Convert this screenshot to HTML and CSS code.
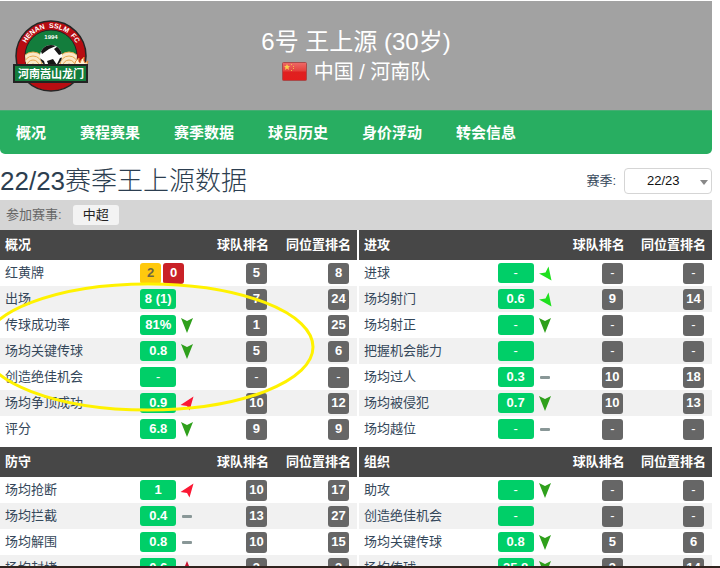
FILE: index.html
```html
<!DOCTYPE html>
<html lang="zh-CN">
<head>
<meta charset="utf-8">
<meta name="viewport" content="width=device-width, initial-scale=1">
<title>王上源 22/23赛季数据</title>
<link rel="stylesheet" href="styles.css">
</head>
<body>
<svg class="symbols" aria-hidden="true">
  <symbol id="down" viewBox="0 0 14 16"><path d="M1 1 7 4 13 1 7 16Z" fill="#2fa01c"/></symbol>
  <symbol id="up" viewBox="0 0 14 16"><path d="M1 16 7 12 13 16 7 1Z" fill="#c8102e"/></symbol>
  <symbol id="down-light" viewBox="0 0 14 16"><path d="M1 8.500 7.500 7.500 10.500 1.500 13.500 15.500Z" fill="#1fe01f"/></symbol>
  <symbol id="up-light" viewBox="0 0 14 16"><path d="M.5 10 13.500 1.500 9.500 15.500 7 11Z" fill="#fb1834"/></symbol>
  <symbol id="flat" viewBox="0 0 14 16"><rect x="2" y="7" width="10" height="3" rx="1" fill="#899797"/></symbol>
</svg>
<div class="page">
  <header class="hero">
    <svg class="crest" viewBox="0 0 76 74" role="img" aria-label="河南嵩山龙门">
      <defs>
        <path id="arc" d="M10 37A28 28 0 0 1 66 37"/>
        <clipPath id="inner"><circle cx="38" cy="37" r="26"/></clipPath>
        <clipPath id="ball"><circle cx="38" cy="37" r="11"/></clipPath>
      </defs>
      <circle cx="38" cy="37" r="35" fill="#b80d12" stroke="#252525" stroke-width="1.500"/>
      <circle cx="38" cy="37" r="26" fill="#137d3c" stroke="#222"/>
      <text class="crest-name"><textPath href="#arc" startOffset="50%" text-anchor="middle">HENAN&nbsp; SSLM&nbsp; FC</textPath></text>
      <text class="crest-year" x="38" y="20">1994</text>
      <g clip-path="url(#inner)" fill="#f9e8c8" stroke="#e8a850">
        <circle cx="20" cy="45" r="12"/><circle cx="20" cy="46" r="9"/><circle cx="20" cy="47" r="6"/><circle cx="20" cy="48" r="3"/>
        <circle cx="56" cy="45" r="12"/><circle cx="56" cy="46" r="9"/><circle cx="56" cy="47" r="6"/><circle cx="56" cy="48" r="3"/>
      </g>
      <path d="M61 47q1-6 5-8-1 4 1 5 1-4 4-6-1 4 1 6l3-2q0 4-4 5Z" fill="#fff2d8" stroke="#e58b35"/>
      <circle cx="38" cy="37" r="11" fill="#fff"/>
      <path clip-path="url(#ball)" d="M34 23 43 27 36 30 29 35 27 30ZM45 27 51 34 46 36 41 30ZM34 42 40 40 44 46 37 50ZM25 38 31 42 33 49 27 48ZM47 39 51 38 47 47 44 45Z" fill="#161616"/>
      <rect x="1" y="46" width="73" height="17" fill="#137d3c" stroke="#232323" stroke-width="2"/>
      <text class="crest-city" x="38" y="59">河南嵩山龙门</text>
    </svg>
    <div class="identity">
      <h1>6号 王上源 (30岁)</h1>
      <p>
        <svg class="flag" viewBox="0 0 25 19" aria-hidden="true">
          <defs><linearGradient id="shine" x2="0" y2="1"><stop stop-color="#ee6a68"/><stop offset=".48" stop-color="#e3403c"/><stop offset=".52" stop-color="#df2020"/><stop offset="1" stop-color="#e31d1d"/></linearGradient></defs>
          <rect x=".5" y=".5" width="24" height="18" rx="1" fill="url(#shine)" stroke="#a94a4a"/>
          <path d="m5 2 1 2h2L6.500 5.500 7 8 5 6.500 3 8l.5-2.500L2 4h2Z" fill="#f8d04c"/>
          <path d="M9 2h1v1H9zM11 4h1v1h-1zM11 6h1v1h-1zM9 8h1v1H9z" fill="#f3b64c"/>
        </svg>
        <span>中国 / 河南队</span>
      </p>
    </div>
  </header>
  <nav class="tabs">
    <a href="#">概况</a><a href="#">赛程赛果</a><a href="#">赛季数据</a><a href="#">球员历史</a><a href="#">身价浮动</a><a href="#">转会信息</a>
  </nav>
  <div class="season">
    <h2>22/23赛季王上源数据</h2>
    <label for="season">赛季:</label>
    <span class="picker"><select id="season"><option>22/23</option></select></span>
  </div>
  <div class="filter"><span>参加赛事:</span><button type="button">中超</button></div>
  <main class="stats">
    <table>
      <thead><tr><th class="name">概况</th><th class="value"></th><th class="rank">球队排名</th><th class="rank">同位置排名</th></tr></thead>
      <tbody>
        <tr><td>红黄牌</td><td><span class="cell"><b class="card yellow">2</b><b class="card red">0</b></span></td><td><b class="place">5</b></td><td><b class="place">8</b></td></tr>
        <tr><td>出场</td><td><span class="cell"><b class="score">8 (1)</b></span></td><td><b class="place">7</b></td><td><b class="place">24</b></td></tr>
        <tr><td>传球成功率</td><td><span class="cell"><b class="score">81%</b><svg class="trend"><use href="#down"/></svg></span></td><td><b class="place">1</b></td><td><b class="place">25</b></td></tr>
        <tr><td>场均关键传球</td><td><span class="cell"><b class="score">0.8</b><svg class="trend"><use href="#down"/></svg></span></td><td><b class="place">5</b></td><td><b class="place">6</b></td></tr>
        <tr><td>创造绝佳机会</td><td><span class="cell"><b class="score none">-</b></span></td><td><b class="place none">-</b></td><td><b class="place none">-</b></td></tr>
        <tr><td>场均争顶成功</td><td><span class="cell"><b class="score">0.9</b><svg class="trend"><use href="#up-light"/></svg></span></td><td><b class="place">10</b></td><td><b class="place">12</b></td></tr>
        <tr><td>评分</td><td><span class="cell"><b class="score">6.8</b><svg class="trend"><use href="#down"/></svg></span></td><td><b class="place">9</b></td><td><b class="place">9</b></td></tr>
      </tbody>
    </table>
    <table>
      <thead><tr><th class="name">进攻</th><th class="value"></th><th class="rank">球队排名</th><th class="rank">同位置排名</th></tr></thead>
      <tbody>
        <tr><td>进球</td><td><span class="cell"><b class="score none">-</b><svg class="trend"><use href="#down-light"/></svg></span></td><td><b class="place none">-</b></td><td><b class="place none">-</b></td></tr>
        <tr><td>场均射门</td><td><span class="cell"><b class="score">0.6</b><svg class="trend"><use href="#down-light"/></svg></span></td><td><b class="place">9</b></td><td><b class="place">14</b></td></tr>
        <tr><td>场均射正</td><td><span class="cell"><b class="score none">-</b><svg class="trend"><use href="#down"/></svg></span></td><td><b class="place none">-</b></td><td><b class="place none">-</b></td></tr>
        <tr><td>把握机会能力</td><td><span class="cell"><b class="score none">-</b></span></td><td><b class="place none">-</b></td><td><b class="place none">-</b></td></tr>
        <tr><td>场均过人</td><td><span class="cell"><b class="score">0.3</b><svg class="trend"><use href="#flat"/></svg></span></td><td><b class="place">10</b></td><td><b class="place">18</b></td></tr>
        <tr><td>场均被侵犯</td><td><span class="cell"><b class="score">0.7</b><svg class="trend"><use href="#down"/></svg></span></td><td><b class="place">10</b></td><td><b class="place">13</b></td></tr>
        <tr><td>场均越位</td><td><span class="cell"><b class="score none">-</b><svg class="trend"><use href="#flat"/></svg></span></td><td><b class="place none">-</b></td><td><b class="place none">-</b></td></tr>
      </tbody>
    </table>
    <table>
      <thead><tr><th class="name">防守</th><th class="value"></th><th class="rank">球队排名</th><th class="rank">同位置排名</th></tr></thead>
      <tbody>
        <tr><td>场均抢断</td><td><span class="cell"><b class="score">1</b><svg class="trend"><use href="#up-light"/></svg></span></td><td><b class="place">10</b></td><td><b class="place">17</b></td></tr>
        <tr><td>场均拦截</td><td><span class="cell"><b class="score">0.4</b><svg class="trend"><use href="#flat"/></svg></span></td><td><b class="place">13</b></td><td><b class="place">27</b></td></tr>
        <tr><td>场均解围</td><td><span class="cell"><b class="score">0.8</b><svg class="trend"><use href="#flat"/></svg></span></td><td><b class="place">10</b></td><td><b class="place">15</b></td></tr>
        <tr><td>场均封堵</td><td><span class="cell"><b class="score">0.6</b><svg class="trend"><use href="#up"/></svg></span></td><td><b class="place">3</b></td><td><b class="place">3</b></td></tr>
      </tbody>
    </table>
    <table>
      <thead><tr><th class="name">组织</th><th class="value"></th><th class="rank">球队排名</th><th class="rank">同位置排名</th></tr></thead>
      <tbody>
        <tr><td>助攻</td><td><span class="cell"><b class="score none">-</b><svg class="trend"><use href="#down"/></svg></span></td><td><b class="place none">-</b></td><td><b class="place none">-</b></td></tr>
        <tr><td>创造绝佳机会</td><td><span class="cell"><b class="score none">-</b></span></td><td><b class="place none">-</b></td><td><b class="place none">-</b></td></tr>
        <tr><td>场均关键传球</td><td><span class="cell"><b class="score">0.8</b><svg class="trend"><use href="#down"/></svg></span></td><td><b class="place">5</b></td><td><b class="place">6</b></td></tr>
        <tr><td>场均传球</td><td><span class="cell"><b class="score">35.8</b><svg class="trend"><use href="#down"/></svg></span></td><td><b class="place">3</b></td><td><b class="place">14</b></td></tr>
      </tbody>
    </table>
    <svg class="marker" viewBox="0 0 320 132" aria-hidden="true"><ellipse cx="148" cy="66" rx="165" ry="63"/></svg>
  </main>
</div>
<div class="edge"></div>
</body>
</html>
```

FILE: styles.css
```css
* { box-sizing: border-box; }

body {
  margin: 0;
  height: 100vh;
  display: flex;
  flex-direction: column;
  overflow: hidden;
  background: #fff;
  color: #34475a;
  font: 400 13px/18px "Liberation Sans", "Noto Sans CJK SC", sans-serif;
}

h1, h2, p { margin: 0; font-weight: 400; }

.symbols { position: absolute; width: 0; height: 0; }

.page {
  flex: 1;
  min-height: 0;
  overflow: hidden;
  padding: 1px 8px 0 0;
}

.edge { height: 2px; background: #30231e; }

/* Player header */
.hero {
  display: grid;
  grid-template-columns: 88px 1fr 88px;
  align-items: center;
  height: 109px;
  background: #a2a2a2;
  color: #fff;
}

.crest { width: 76px; height: 74px; margin-left: 13px; overflow: visible; }
.crest text { fill: #fff; font-weight: 700; }
.crest .crest-name { font-size: 7px; }
.crest .crest-year { font-size: 6px; text-anchor: middle; }
.crest .crest-city { font-size: 11px; text-anchor: middle; }

.identity { text-align: center; }
.identity h1 { font-size: 24px; line-height: 32px; }
.identity p {
  display: flex;
  justify-content: center;
  align-items: center;
  gap: 7px;
  font-size: 20px;
  line-height: 28px;
}
.flag { width: 25px; height: 19px; }

.tabs {
  display: flex;
  gap: 34px;
  height: 44px;
  padding: 0 16px;
  background: #28ae61;
  border-top: 1px solid #45ad72;
  border-radius: 0 0 5px 5px;
}
.tabs a {
  color: #fff;
  font-size: 15px;
  font-weight: 700;
  line-height: 44px;
  text-decoration: none;
}

/* Season title and picker */
.season { display: flex; align-items: center; height: 46px; padding-top: 8px; }
.season h2 { flex: 1; font-size: 26px; font-weight: 300; line-height: 36px; color: #2c3e50; }
.season label { margin-right: 8px; }
.picker { position: relative; }
.picker::after {
  content: "";
  position: absolute;
  right: 4px;
  top: 12px;
  border: 4px solid transparent;
  border-top: 5px solid #888;
  border-bottom: 0;
  pointer-events: none;
}
.picker select {
  display: block;
  appearance: none;
  width: 88px;
  height: 26px;
  padding: 0 22px;
  border: 1px solid #d5d5d5;
  border-radius: 4px;
  background: #fff;
  color: #111;
  font: inherit;
}

.filter {
  display: flex;
  align-items: center;
  gap: 11px;
  height: 30px;
  padding-left: 6px;
  background: #d5d5d5;
  color: #666;
}
.filter button {
  height: 20px;
  padding: 0 10px;
  border: 0;
  border-radius: 3px;
  background: #f3f3f3;
  color: #222;
  font: inherit;
}

/* Stat tables */
.stats {
  position: relative;
  display: grid;
  grid-template-columns: 357fr 353fr;
  gap: 5px 2px;
  align-items: start;
}
table { width: 100%; table-layout: fixed; border-collapse: collapse; }
th {
  height: 30px;
  padding: 0 6px 0 5px;
  background: #474747;
  color: #fff;
  text-align: left;
  font-weight: 700;
  white-space: nowrap;
}
.name { width: 39%; }
.rank { width: 23%; text-align: right; }
td { height: 26px; padding: 0 0 0 5px; }
td:nth-child(2) { padding-left: 1px; }
td:nth-child(n+3) { padding: 0 8px 0 0; text-align: right; }
tbody tr:nth-child(even) { background: #f1f1f1; }

.cell { display: flex; align-items: center; gap: 2px; }
.cell > * { flex: none; }
.score, .card, .place {
  color: #fff;
  font-weight: 700;
  text-align: center;
  border-radius: 3px;
}
.score { width: 36px; height: 20px; line-height: 20px; background: #00cf68; }
.card, .place { width: 21px; height: 21px; line-height: 20px; }
.place { display: inline-block; vertical-align: middle; background: #666; }
.none { font-weight: 400; }
.yellow { background: #ffc90e; color: #6d6542; }
.red { background: #c92127; }
.trend { width: 14px; height: 16px; margin-left: 2px; }

/* Hand-drawn ring around the passing figures */
.marker {
  position: absolute;
  left: 0;
  top: 51px;
  width: 320px;
  height: 132px;
  pointer-events: none;
}
.marker ellipse { fill: none; stroke: #fff200; stroke-width: 3; }
```
